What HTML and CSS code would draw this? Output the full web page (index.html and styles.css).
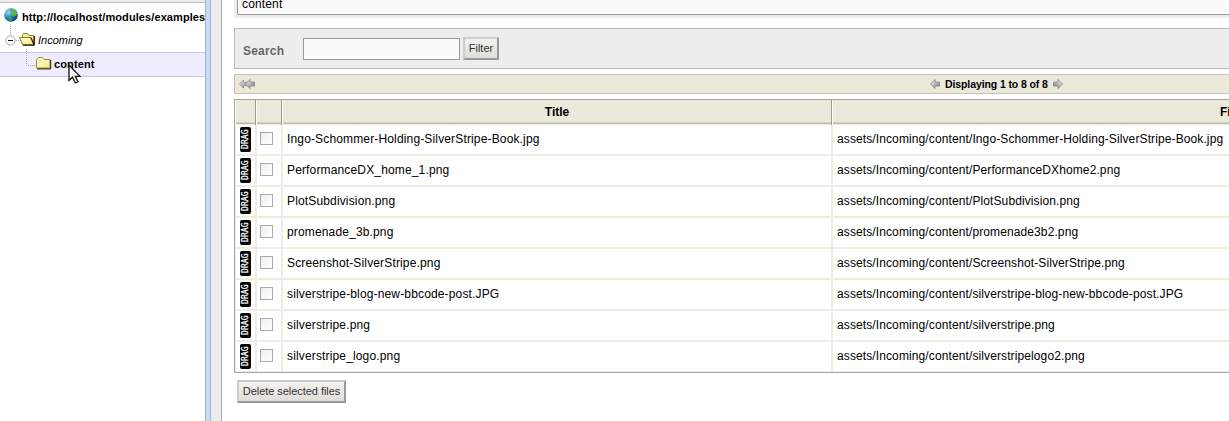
FILE: index.html
```html
<!DOCTYPE html>
<html lang="en">
<head>
<meta charset="utf-8">
<title>Files</title>
<link rel="stylesheet" href="styles.css">
</head>
<body>
<svg width="0" height="0" class="defs" aria-hidden="true">
  <defs>
    <linearGradient id="arrowFill" x1="0" y1="0" x2="1" y2="1"><stop offset="0" stop-color="#fafafa"/><stop offset="1" stop-color="#777"/></linearGradient>
    <linearGradient id="folderFill" x1="0" y1="0" x2="1" y2="1"><stop offset="0" stop-color="#fffee0"/><stop offset="1" stop-color="#fbe57c"/></linearGradient>
    <radialGradient id="sea" cx=".3" cy=".3" r=".8"><stop offset="0" stop-color="#9adcf8"/><stop offset=".5" stop-color="#2083cc"/><stop offset="1" stop-color="#08367a"/></radialGradient>
    <symbol id="arrow" viewBox="0 0 10 10"><path d="M.5 5L5 .5V3H9.500V7H5V9.500Z" fill="url(#arrowFill)" stroke="#858585" stroke-width=".8"/></symbol>
  </defs>
</svg>
<div class="app">
  <aside class="sidebar">
    <div class="side-top"></div>
    <div class="node root">
      <svg class="globe" width="14" height="14" viewBox="0 0 14 14"><circle cx="7" cy="7" r="6.800" fill="url(#sea)"/><path d="M7 1L10 1 12 3 13 5.500 12 8 10 7 9.500 9 8 7 7 5 8 3.500Z" fill="#62b83c"/><path d="M4 8.500L7 9 8.500 10.500 7 13 5 12Z" fill="#3f9c4c"/><path d="M1.500 4L4 1.500 5.500 2 4 4 2 6Z" fill="#72c99c"/></svg>
      <span>http://localhost/modules/examples</span>
    </div>
    <div class="node folder">
      <svg class="branch" width="19" height="24" viewBox="0 0 19 24"><path d="M10.500 -4V7M16 12.500H19" stroke="#aaa" stroke-dasharray="1 1" fill="none"/><circle cx="10.500" cy="12.500" r="4.700" fill="#fff" stroke="#aaa"/><path d="M8 12.500H13" stroke="#111"/></svg>
      <svg width="17" height="14" viewBox="0 0 17 14"><path d="M3.500 5.500V2.500L4.500 1.500H8.500L10 3.500H14.500V12.500H3.500Z" fill="#f7eb94" stroke="#8d7c1c"/><path d="M.5 5.500H11.500L14.500 12.500H3.500Z" fill="url(#folderFill)" stroke="#8d7c1c"/><path d="M12 5.500L15 12.500M4 13.300H15.400V4" fill="none" stroke="#161200"/></svg>
      <span>Incoming</span>
    </div>
    <div class="node selected">
      <svg class="branch" width="36" height="24" viewBox="0 0 36 24"><path d="M26.500 -4V12.500H35" stroke="#aaa" stroke-dasharray="1 1" fill="none"/></svg>
      <svg width="16" height="14" viewBox="0 0 16 14"><path d="M.5 12V3.500L2.500 1.500H6.500L8 3.500H14V12Z" fill="url(#folderFill)" stroke="#a08d2c"/><path d="M1 12.900H14.700V4" fill="none" stroke="#1d1903"/></svg>
      <span>content</span>
    </div>
    <svg class="cursor" width="13" height="21" viewBox="0 0 13 21"><path d="M1 1V16.500L4.500 13.200 7.300 19 10 17.800 7.300 12.300H12Z" fill="#fff" stroke="#111" stroke-width="1.300"/></svg>
  </aside>
  <div class="splitter"></div>
  <div class="gutter"></div>
  <main class="main">
    <div class="name-panel"><div class="name-field">content</div></div>
    <form class="search"><label for="q">Search</label><input id="q" type="text"><button type="button" class="btn filter">Filter</button></form>
    <div class="pager">
      <span class="first"><svg width="9" height="10"><use href="#arrow"/></svg><svg width="10" height="10"><use href="#arrow"/></svg></span>
      <span class="pages"><svg width="10" height="10"><use href="#arrow"/></svg><b>Displaying 1 to 8 of 8</b><svg class="next" width="10" height="10"><use href="#arrow"/></svg></span>
    </div>
    <div class="table">
      <div class="row head"><div></div><div></div><div>Title</div><div>Filename</div></div>
      <div class="row"><div><i class="drag">DRAG</i></div><div><i class="check"></i></div><div>Ingo-Schommer-Holding-SilverStripe-Book.jpg</div><div>assets/Incoming/content/Ingo-Schommer-Holding-SilverStripe-Book.jpg</div></div>
      <div class="row"><div><i class="drag">DRAG</i></div><div><i class="check"></i></div><div>PerformanceDX_home_1.png</div><div>assets/Incoming/content/PerformanceDXhome2.png</div></div>
      <div class="row"><div><i class="drag">DRAG</i></div><div><i class="check"></i></div><div>PlotSubdivision.png</div><div>assets/Incoming/content/PlotSubdivision.png</div></div>
      <div class="row"><div><i class="drag">DRAG</i></div><div><i class="check"></i></div><div>promenade_3b.png</div><div>assets/Incoming/content/promenade3b2.png</div></div>
      <div class="row"><div><i class="drag">DRAG</i></div><div><i class="check"></i></div><div>Screenshot-SilverStripe.png</div><div>assets/Incoming/content/Screenshot-SilverStripe.png</div></div>
      <div class="row"><div><i class="drag">DRAG</i></div><div><i class="check"></i></div><div>silverstripe-blog-new-bbcode-post.JPG</div><div>assets/Incoming/content/silverstripe-blog-new-bbcode-post.JPG</div></div>
      <div class="row"><div><i class="drag">DRAG</i></div><div><i class="check"></i></div><div>silverstripe.png</div><div>assets/Incoming/content/silverstripe.png</div></div>
      <div class="row"><div><i class="drag">DRAG</i></div><div><i class="check"></i></div><div>silverstripe_logo.png</div><div>assets/Incoming/content/silverstripelogo2.png</div></div>
    </div>
    <button type="button" class="btn delete">Delete selected files</button>
  </main>
</div>
</body>
</html>
```
FILE: styles.css
```css
* { box-sizing: border-box; }
body { margin: 0; overflow: hidden; background: #fff; color: #000; font: 12px/14px "Liberation Sans", Arial, sans-serif; }
svg { display: block; flex: none; }
.defs { position: absolute; }
.app { display: flex; width: 1229px; height: 421px; overflow: hidden; }
.sidebar { position: relative; flex: none; width: 205px; overflow: hidden; font-size: 11px; }
.side-top { height: 3px; background: #ededed; border-bottom: 1px solid #bbb; }
.node { display: flex; align-items: center; height: 24px; white-space: nowrap; }
.root { height: 25px; padding: 3px 0 0 4px; gap: 4px; font-weight: bold; letter-spacing: .09px; }
.globe { margin-top: -5px; }
.branch { overflow: visible; }
.folder { font-style: italic; }
.folder span { margin-left: 2px; }
.selected { height: 25px; background: #ededff; border: solid #c8c8f8; border-width: 1px 0; font-weight: bold; letter-spacing: .12px; }
.selected span { margin: -2px 0 0 2px; }
.folder svg:not(.branch), .selected svg:not(.branch) { margin-top: -3px; }
.cursor { position: absolute; left: 68px; top: 64px; }
.splitter { flex: none; width: 6px; background: #cadcf3; border: solid #9eb5d8; border-width: 0 1px; }
.gutter { flex: none; width: 11px; background: #ededed; border-right: 1px solid #aaa; }
.main { flex: none; width: 1700px; padding-left: 12px; }
.name-panel { height: 18px; padding: 0 3px 3px; background: #ededed; }
.name-field { height: 15px; padding-left: 4px; line-height: 8px; letter-spacing: .15px; background: #fafafa; border: solid #999; border-width: 0 1px 1px; }
.search { display: flex; align-items: flex-start; height: 41px; margin-top: 10px; padding: 8px; background: #ededed; border: 1px solid #bbb; }
.search label { width: 60px; padding-top: 7px; color: #666; font-weight: bold; letter-spacing: .2px; }
.search input { width: 157px; height: 22px; margin: 1px 3px 0 0; padding: 2px; background: #fafafa; border: 1px solid #999; }
.btn { display: block; height: 23px; padding: 0; font: 11px/17px "Liberation Sans", Arial, sans-serif; color: #333; background: linear-gradient(#f4f2ef, #dfddd7); border: 2px solid; border-color: #ccc #999 #999 #ccc; }
.filter { width: 36px; }
.delete { width: 109px; margin: 7px 0 0 3px; letter-spacing: -.05px; }
.pager { display: flex; align-items: center; height: 20px; margin-top: 5px; padding-left: 4px; background: #ebe9da; border: 1px solid #c5c2b0; font-size: 10.500px; letter-spacing: -.1px; }
.pager b { margin-top: -1px; }
.first { display: flex; width: 691px; }
.first svg + svg { margin-left: -3px; }
.pages { display: flex; align-items: center; gap: 5px; white-space: nowrap; }
.next { transform: scaleX(-1); }
.table { height: 274px; margin-top: 5px; border: 1px solid #a5a5a5; }
.row { display: grid; grid-template-columns: 22px 26px 550px 1fr; height: 31px; line-height: 29px; }
.row > div { padding-left: 4px; border-right: 2px solid #efeddf; border-bottom: 2px solid #efeddf; white-space: nowrap; }
.row > div:first-child { border-left: 1px solid #efeddf; }
.row > div:nth-child(2) { padding-left: 3px; }
.row > div:nth-child(3) { letter-spacing: .15px; }
.row > div:nth-child(4) { letter-spacing: .11px; }
.row:last-child { height: 30px; }
.row:last-child > div { border-bottom-width: 1px; }
.row.head { height: 25px; line-height: 24px; font-weight: bold; text-align: center; background: linear-gradient(#ebe9da 0 22px, #d5d2c4 22px 23px, #bfbcae 23px 24px, #efeddf 24px); }
.row.head > div { padding: 0; border: 0; border-right: 1px solid #fff; box-shadow: inset -1px 0 #999; }
.row.head > div:first-child { border-left: 1px solid #fff; }
.row.head > div:nth-child(3) { padding-right: 1px; }
.row.head > div:nth-child(n + 3) { letter-spacing: 0; }
.row.head > div:last-child { padding-left: 387px; text-align: left; }
.drag { display: flex; align-items: center; justify-content: center; width: 11px; height: 25px; margin-top: 2px; color: #fff; background: #000; border-radius: 2px; writing-mode: vertical-rl; transform: rotate(180deg); font: 8px/11px "DejaVu Sans Mono", monospace; letter-spacing: .1px; -webkit-text-stroke: .25px #fff; }
.check { display: block; width: 13px; height: 13px; margin: 7px 0 0; background: linear-gradient(135deg, #eee, #fff); border: 1px solid #aaa; }
```
